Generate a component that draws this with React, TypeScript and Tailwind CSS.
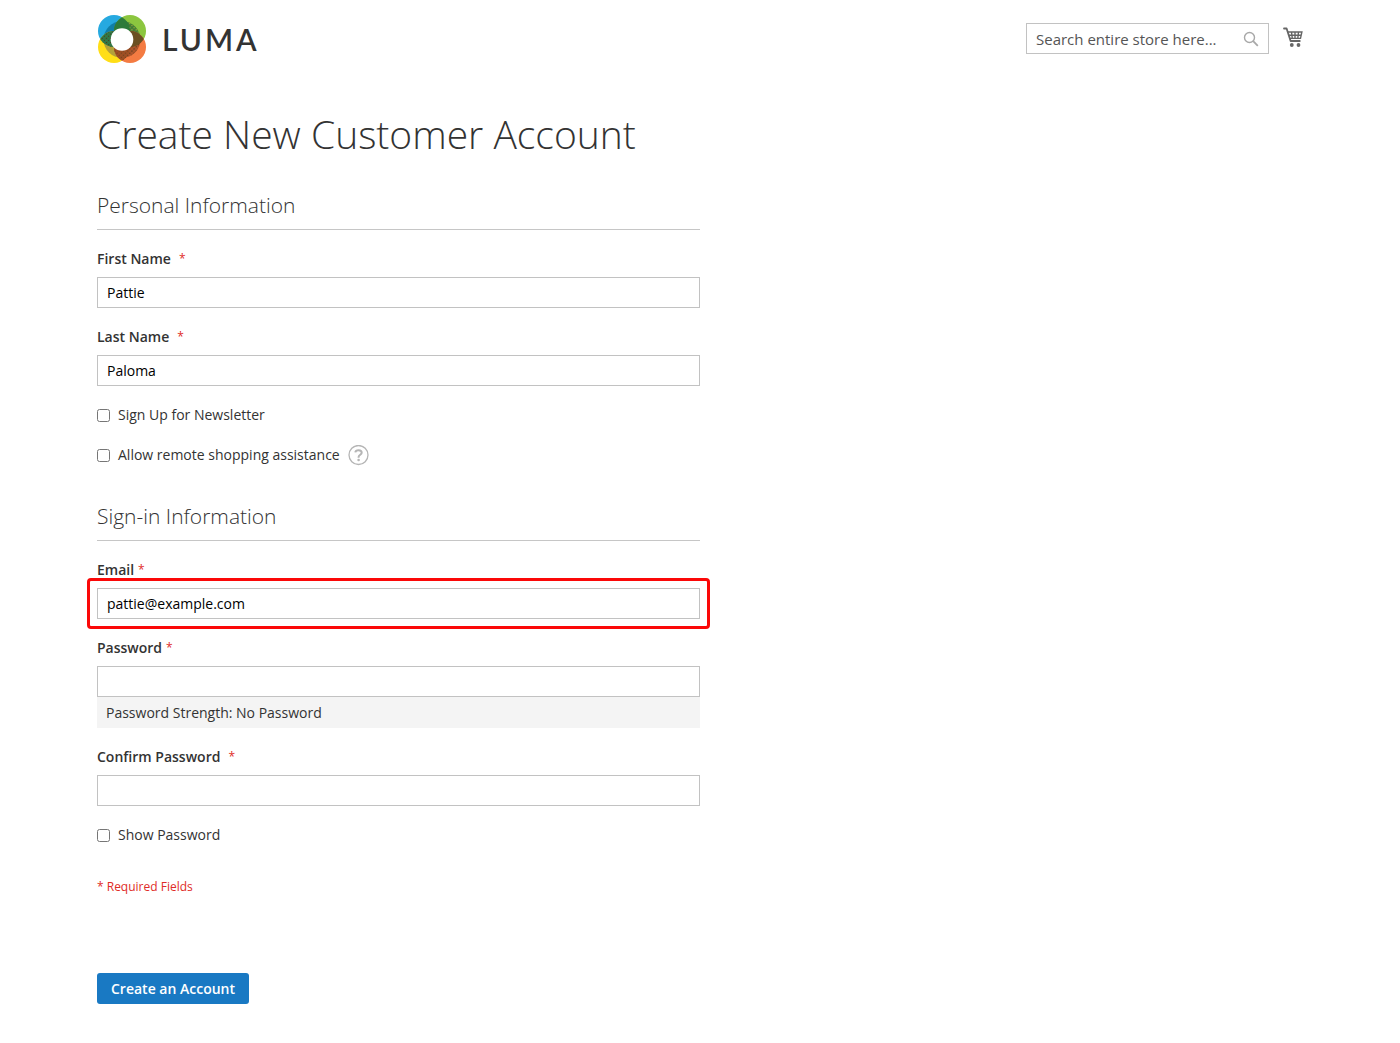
import { useState } from "react";
import type { ReactNode } from "react";

function LumaMark() {
  return (
    <svg viewBox="0 0 48 48" className="size-12 shrink-0" aria-hidden="true">
      <defs>
        <clipPath id="blue"><circle cx="16" cy="16" r="16" /></clipPath>
        <clipPath id="green"><circle cx="32" cy="16" r="16" /></clipPath>
        <clipPath id="yellow"><circle cx="16" cy="32" r="16" /></clipPath>
        <clipPath id="ring"><circle cx="24" cy="24.5" r="18.5" /></clipPath>
        <pattern id="gold-dots" width="3" height="3" patternUnits="userSpaceOnUse" patternTransform="rotate(45)">
          <circle cx="1.5" cy="1.5" r="0.7" fill="#b9a83c" />
        </pattern>
        <pattern id="dark-dots" width="3" height="3" patternUnits="userSpaceOnUse" patternTransform="rotate(45)">
          <circle cx="1.5" cy="1.5" r="0.7" fill="#4d3a1c" />
        </pattern>
      </defs>
      <circle cx="16" cy="16" r="16" fill="#26a9e0" />
      <circle cx="32" cy="16" r="16" fill="#8cc63f" />
      <circle cx="16" cy="32" r="16" fill="#ffde17" />
      <circle cx="32" cy="32" r="16" fill="#f47b42" />
      <g clipPath="url(#ring)">
        <circle cx="16" cy="16" r="16" fill="#107fa8" />
        <circle cx="32" cy="16" r="16" fill="#3f7d36" />
        <circle cx="32" cy="16" r="16" fill="url(#gold-dots)" />
        <circle cx="16" cy="32" r="16" fill="#b3a03a" />
        <circle cx="32" cy="32" r="16" fill="#b0552b" />
        <circle cx="32" cy="32" r="16" fill="url(#dark-dots)" />
      </g>
      <circle cx="32" cy="16" r="16" fill="#2d7a3a" clipPath="url(#blue)" />
      <g clipPath="url(#blue)">
        <circle cx="16" cy="32" r="16" fill="#2f7a48" />
        <circle cx="16" cy="32" r="16" fill="url(#dark-dots)" />
      </g>
      <circle cx="32" cy="32" r="16" fill="#6b4f22" clipPath="url(#green)" />
      <g clipPath="url(#yellow)">
        <circle cx="32" cy="32" r="16" fill="#a04f24" />
        <circle cx="32" cy="32" r="16" fill="url(#dark-dots)" opacity="0.6" />
      </g>
      <circle cx="24" cy="24.5" r="11.3" fill="#fff" />
    </svg>
  );
}

function LumaWord() {
  return (
    <span className="ml-4 font-[Lato,sans-serif] text-[30px] leading-8 font-semibold tracking-widest text-[#333]">
      LUMA
    </span>
  );
}

function CartIcon() {
  return (
    <svg viewBox="0 0 20 21" className="h-[21px] w-5" fill="none" stroke="#666" aria-hidden="true">
      <path d="M1 1.5h2.6l4 12.5h9.2" strokeWidth="1.8" strokeLinecap="round" strokeLinejoin="round" />
      <path d="M4.5 5h14.4l-1.4 6.4H6.6M5 8.2h13M8.5 5l.8 6.4M12 5v6.4M15.5 5l-.7 6.4" strokeWidth="1.4" />
      <circle cx="8.8" cy="18" r="1.9" fill="#666" stroke="none" />
      <circle cx="15.5" cy="18" r="1.9" fill="#666" stroke="none" />
    </svg>
  );
}

function Legend({ children }: { children: ReactNode }) {
  return (
    <h2 className="border-b border-[#c6c6c6] pb-[9px] text-[21px] leading-[29px] font-light text-[#333]">{children}</h2>
  );
}

type FieldProps = { id: string; label: string; type?: string; value?: string; wide?: boolean; marked?: boolean; note?: string };

function Field({ id, label, type = "text", value = "", wide, marked, note }: FieldProps) {
  const [text, setText] = useState(value);
  return (
    <div className="mt-[19px]">
      <label htmlFor={id} className={`mb-2 flex items-center text-sm leading-5 font-semibold ${wide ? "gap-2" : "gap-1"}`}>
        {label}
        <span className="text-xs font-normal text-[#e02b27]">*</span>
      </label>
      <div className="relative">
        <input
          id={id}
          type={type}
          value={text}
          onChange={(e) => setText(e.target.value)}
          className="block h-[31px] w-full border border-[#c2c2c2] bg-white px-[9px] text-sm text-black outline-none"
        />
        {marked && <span className="pointer-events-none absolute -inset-[10px] rounded-[4px] border-[3px] border-[#fb0808]" />}
      </div>
      {note && <p className="bg-[#f4f4f4] px-[9px] text-sm leading-[31px]">{note}</p>}
    </div>
  );
}

function Check({ id, label }: { id: string; label: string }) {
  return (
    <div className="flex items-center gap-2">
      <input id={id} type="checkbox" className="size-[13px]" />
      <label htmlFor={id} className="text-sm leading-5">{label}</label>
    </div>
  );
}

export default function App() {
  return (
    <div className="bg-white px-[97px] pb-10 font-['Open_Sans',sans-serif] text-[#333]">
      <header className="flex items-start justify-between pt-[15px]">
        <a href="#" aria-label="Luma" className="ml-px flex items-center">
          <LumaMark />
          <LumaWord />
        </a>
        <div className="mt-2 flex items-start gap-[14px]">
          <form className="relative">
            <input
              type="text"
              aria-label="Search"
              placeholder="Search entire store here..."
              className="block h-[31px] w-[243px] border border-[#c2c2c2] pr-9 pl-[9px] text-[15px] outline-none placeholder:text-[#555]"
            />
            <button type="button" aria-label="Search" className="absolute top-2 right-[10px]">
              <svg viewBox="0 0 16 16" className="size-4" fill="none" stroke="#a8a8a8" aria-hidden="true">
                <circle cx="6.5" cy="6.5" r="5" strokeWidth="1.4" />
                <path d="M10.2 10.2l4.6 4.6" strokeWidth="1.8" />
              </svg>
            </button>
          </form>
          <a href="#" aria-label="Cart" className="mt-1"><CartIcon /></a>
        </div>
      </header>

      <main>
        <h1 className="mt-[49px] text-[39px] leading-[44px] font-light">Create New Customer Account</h1>
        <form className="w-1/2">
          <section className="pt-[35px]">
            <Legend>Personal Information</Legend>
            <Field id="first" label="First Name" value="Pattie" wide />
            <Field id="last" label="Last Name" value="Paloma" wide />
            <div className="mt-[19px] flex flex-col gap-5">
              <Check id="news" label="Sign Up for Newsletter" />
              <div className="flex h-5 items-center gap-2">
                <Check id="assist" label="Allow remote shopping assistance" />
                <button type="button" aria-label="Help">
                  <svg viewBox="0 0 21 21" className="size-[21px]" fill="none" stroke="#b5b5b5" aria-hidden="true">
                    <circle cx="10.5" cy="10" r="9.5" strokeWidth="1.3" />
                    <path d="M7.3 7.4c.4-2.9 6.4-3 6.4.3 0 2-3.1 2.2-3.1 4.4v.6" strokeWidth="2" />
                    <circle cx="10.6" cy="15" r="1.3" fill="#b5b5b5" stroke="none" />
                  </svg>
                </button>
              </div>
            </div>
          </section>
          <section className="pt-[37px]">
            <Legend>Sign-in Information</Legend>
            <Field id="email" label="Email" type="email" value="pattie@example.com" marked />
            <Field id="password" label="Password" type="password" note="Password Strength: No Password" />
            <Field id="confirm" label="Confirm Password" type="password" wide />
            <div className="mt-[19px]">
              <Check id="show" label="Show Password" />
            </div>
          </section>
          <p className="mt-[34px] text-xs leading-4 text-[#e02b27]">* Required Fields</p>
          <button type="button" className="mt-[78px] h-[31px] rounded-[3px] bg-[#1979c3] px-[14px] text-sm font-semibold text-white">
            Create an Account
          </button>
        </form>
      </main>
    </div>
  );
}
